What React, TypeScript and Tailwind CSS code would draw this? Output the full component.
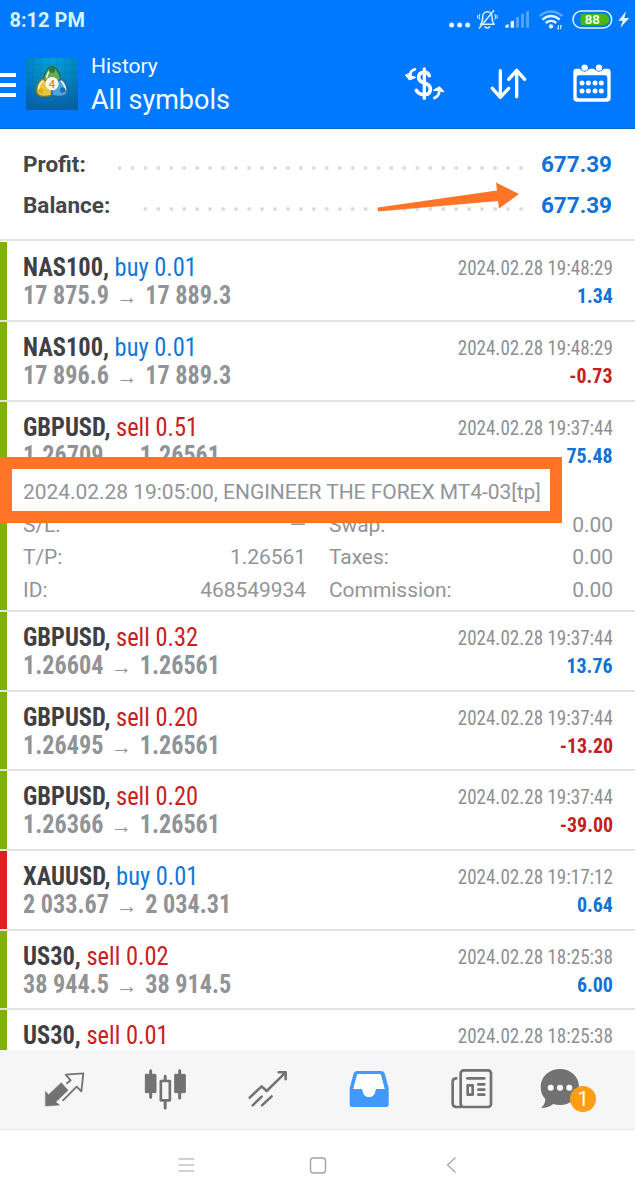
import React from "react";

type Trade = {
  symbol: string;
  side: "buy" | "sell";
  lots: string;
  time: string;
  height: string;
  from?: string;
  to?: string;
  profit?: string;
  stripe?: string;
  expanded?: boolean;
};

const trades: Trade[] = [
  { symbol: "NAS100", side: "buy", lots: "0.01", from: "17 875.9", to: "17 889.3", time: "2024.02.28 19:48:29", profit: "1.34", height: "h-[81px] border-b-2 pt-[1px]" },
  { symbol: "NAS100", side: "buy", lots: "0.01", from: "17 896.6", to: "17 889.3", time: "2024.02.28 19:48:29", profit: "-0.73", height: "h-[80px] border-b-2" },
  { symbol: "GBPUSD", side: "sell", lots: "0.51", from: "1.26709", to: "1.26561", time: "2024.02.28 19:37:44", profit: "75.48", height: "h-[210px] border-b-2", expanded: true },
  { symbol: "GBPUSD", side: "sell", lots: "0.32", from: "1.26604", to: "1.26561", time: "2024.02.28 19:37:44", profit: "13.76", height: "h-[80px] border-b-2" },
  { symbol: "GBPUSD", side: "sell", lots: "0.20", from: "1.26495", to: "1.26561", time: "2024.02.28 19:37:44", profit: "-13.20", height: "h-[79px] border-b-2" },
  { symbol: "GBPUSD", side: "sell", lots: "0.20", from: "1.26366", to: "1.26561", time: "2024.02.28 19:37:44", profit: "-39.00", height: "h-[80px] border-b-2" },
  { symbol: "XAUUSD", side: "buy", lots: "0.01", from: "2 033.67", to: "2 034.31", time: "2024.02.28 19:17:12", profit: "0.64", height: "h-[80px] border-b-2", stripe: "bg-[#e02020]" },
  { symbol: "US30", side: "sell", lots: "0.02", from: "38 944.5", to: "38 914.5", time: "2024.02.28 18:25:38", profit: "6.00", height: "h-[79px] border-b-2" },
  { symbol: "US30", side: "sell", lots: "0.01", time: "2024.02.28 18:25:38", height: "h-[41px]" },
];

function StatusIcons() {
  return (
    <svg className="h-[39px] w-[185px]" viewBox="200 0 555 117" fill="none">
      <g fill="#e3f5ff">
        <circle cx="214" cy="75" r="7.5" />
        <circle cx="238" cy="75" r="7.5" />
        <circle cx="262" cy="75" r="7.5" />
      </g>
      <g stroke="#d5f0ff" strokeWidth="4.5" strokeLinecap="round" strokeLinejoin="round">
        <path d="M300 73h42c-7-6-7-14-7-22 0-9-6-16-14-16s-14 7-14 16c0 8 0 16-7 22z" />
        <path d="M314 80q7 8 14 0M340 32 297 84" />
        <path d="M298 43q-4 8 0 15M292 46q-2 5 0 9M344 43q4 8 0 15M350 46q2 5 0 9" strokeWidth="3" />
      </g>
      <g fill="#e3f5ff">
        <path d="M375 83v-7l10-4v11zM391 83V64l10-2v21z" />
        <path d="M407 83V52l9-2v33zM422 83V43l9-3v43zM437 83V35l9-3v51z" opacity=".35" />
      </g>
      <g stroke="#e3f5ff" strokeWidth="7" fill="none">
        <path d="M478 48q34-27 68 0" opacity=".4" />
        <path d="M486 59q26-22 52 0M496 69q16-13 32 0" />
      </g>
      <circle cx="512" cy="79" r="6.5" fill="#e3f5ff" />
      <path d="M534 75v13M541 75v13M531 84l3 4M544 79l-3-4" stroke="#e3f5ff" strokeWidth="3" />
      <rect x="578" y="33" width="116" height="51" rx="25" stroke="#e3f5ff" strokeWidth="4.5" />
      <path d="M603 41h65q16 2 19 17-2 15-19 18h-65q-6-17 0-35z" fill="#49b80c" />
      <text x="636" y="73" fill="#eaffea" fontSize="40" fontWeight="700" fontFamily="Roboto, sans-serif" textAnchor="middle">88</text>
      <path d="m737 34-23 28h13l-7 21 27-29h-15z" fill="#e3f5ff" />
    </svg>
  );
}

function AppLogo() {
  return (
    <svg className="ml-[10px] h-[52px] w-[52px] shrink-0" viewBox="0 0 156 156">
      <defs>
        <radialGradient id="sky" cx=".5" cy="0" r="1">
          <stop offset="0" stopColor="#02a6d6" />
          <stop offset=".55" stopColor="#0380c0" />
          <stop offset="1" stopColor="#075fa6" />
        </radialGradient>
      </defs>
      <rect width="156" height="156" fill="url(#sky)" />
      <path d="M0 20h156M0 44h156M0 68h156M0 92h156M0 116h156M0 140h156M20 0v156M44 0v156M68 0v156M92 0v156M116 0v156M140 0v156" stroke="#0a6fae" strokeWidth="1.5" opacity=".5" />
      <g strokeWidth="4" strokeLinejoin="round">
        <path d="M78 26c12 0 24 20 27 42l-27 14-26-14c2-22 14-42 26-42z" fill="#6aa957" stroke="#1f6a4c" />
        <path d="M50 62c-12 6-19 24-18 38 1 16 22 18 44 12l2-30z" fill="#e6c63f" stroke="#7d7c34" />
        <path d="M106 62c12 6 19 24 18 38-1 16-22 18-46 12V82z" fill="#4aa4de" stroke="#1c68a8" />
      </g>
      <path d="M62 58q4-16 10-20M38 94q1-16 12-24M118 94q-1-14-12-24" stroke="#e8f2cc" strokeWidth="5" fill="none" strokeLinecap="round" />
      <circle cx="78" cy="36" r="9" fill="#2f7d35" />
      <circle cx="45" cy="98" r="8" fill="#e4ae14" />
      <circle cx="110" cy="96" r="8" fill="#1c68b0" />
      <circle cx="78" cy="77" r="20" fill="#fbf6ee" />
      <text x="78" y="89" fontSize="34" fontWeight="500" fill="#e9813d" textAnchor="middle" fontFamily="Roboto, sans-serif">4</text>
    </svg>
  );
}

function HeaderActions() {
  return (
    <svg className="ml-auto h-[46px] w-[215px] shrink-0" viewBox="69 184 645 138" fill="none" stroke="#fff" strokeLinecap="round" strokeLinejoin="round">
      <g>
        <path d="M133 208v88" strokeWidth="10" />
        <path d="M148 228q-4-10-15-10-17 0-17 15 0 12 17 17 18 5 18 19 0 16-18 16-18 0-24-13" strokeWidth="11" />
        <path d="M105 209q-16 5-15 20" strokeWidth="8" />
        <path d="m77 227 11 14 20-8-13-3-2-9z" fill="#fff" strokeWidth="3" />
        <path d="M163 295q14-6 15-20" strokeWidth="8" />
        <path d="m161 272 17-10 13 14-11-3z" fill="#fff" strokeWidth="4" />
      </g>
      <g strokeWidth="10">
        <path d="M361 213v80M337 266l24 27 25-27" />
        <path d="M410 291v-78M386 239l24-27 24 27" />
      </g>
      <path fill="#fff" stroke="none" fillRule="evenodd" d="M590 207h9q15 18 30 0h13q15 18 30 0h10q10 0 10 10v79q0 10-10 10h-92q-10 0-10-10v-79q0-10 10-10zM597 227q-7 0-7 7v55q0 7 7 7h78q7 0 7-7v-55q0-7-7-7z" />
      <g fill="#fff" stroke="none">
        <circle cx="614" cy="204" r="9.500" />
        <circle cx="657" cy="204" r="9.500" />
        {[606, 625, 645, 664].map((x) => (
          <React.Fragment key={x}>
            <circle cx={x} cy="250" r="7.5" />
            <circle cx={x} cy="274" r="7.5" />
          </React.Fragment>
        ))}
      </g>
    </svg>
  );
}

function SummaryLine({ label, width, dots }: { label: string; width: string; dots: string }) {
  return (
    <div className="flex h-[41px] items-center pr-[23px] pl-[23px] text-[22.5px] font-bold">
      <span className={`${width} text-[#45464a]`}>{label}</span>
      <svg className={`${dots} mt-[6px] h-[4px]`}>
        <line x1="100%" x2="0" y1="2" y2="2" stroke="#dcdcdc" strokeWidth="4" strokeLinecap="round" strokeDasharray="0 12.95" transform="translate(-5 0)" />
      </svg>
      <span className="ml-auto text-[#1071d8]">677.39</span>
    </div>
  );
}

function DetailLine({ left, value, right }: { left: string; value: string; right: string }) {
  return (
    <div className="flex h-[32.700px] items-center">
      <span className="w-[100px]">{left}</span>
      <span className="w-[183px] text-right">{value}</span>
      <span className="ml-[23px]">{right}</span>
      <span className="ml-auto">0.00</span>
    </div>
  );
}

function TradeRow({ t }: { t: Trade }) {
  const tone = t.side === "buy" ? "text-[#0f76dc]" : "text-[#c9201f]";
  const profitTone = t.profit?.startsWith("-") ? "text-[#c4201f]" : "text-[#1072d6]";
  return (
    <div className={`relative flex shrink-0 border-[#e4e4e5] ${t.height}`}>
      <div className={`w-[6.500px] shrink-0 ${t.stripe ?? "bg-[#7fb202]"}`} />
      <div className="min-w-0 flex-1 pt-[11px] pr-[22px] pl-[16.500px]">
        <div className="flex h-[28px] items-center justify-between whitespace-nowrap [font-stretch:75%]">
          <div className="origin-left scale-x-[0.94] text-[26px]">
            <span className="font-bold text-[#3f4045]">{t.symbol},</span> <span className={tone}>{`${t.side} ${t.lots}`}</span>
          </div>
          <span className="origin-right scale-x-[0.908] pt-[4px] text-[21px] text-[#8e8f92]">{t.time}</span>
        </div>
        {t.from && (
          <div className="flex h-[29px] items-center justify-between whitespace-nowrap font-bold [font-stretch:75%]">
            <div className="flex origin-left scale-x-[0.956] items-center text-[25.300px] text-[#919396]">
              <span>{t.from}</span>
              <span className="flex h-[29px] w-[38px] items-center justify-center pt-[2px] font-['Liberation_Sans'] text-[22px] leading-none font-normal">→</span>
              <span>{t.to}</span>
            </div>
            <span className={`origin-right scale-x-[0.95] pt-[3px] text-[21px] ${profitTone}`}>{t.profit}</span>
          </div>
        )}
        {t.expanded && (
          <div className="text-[21px] font-normal tracking-[-0.045px] whitespace-nowrap text-[#929497]">
            <div className="flex h-[39px] items-center pt-[6px]">2024.02.28 19:05:00, ENGINEER THE FOREX MT4-03[tp]</div>
            <DetailLine left="S/L:" value="—" right="Swap:" />
            <DetailLine left="T/P:" value="1.26561" right="Taxes:" />
            <DetailLine left="ID:" value="468549934" right="Commission:" />
          </div>
        )}
      </div>
      {t.expanded && <div className="absolute top-[55px] left-0 h-[66px] w-[562px] border-[12px] border-[#ff7427]" />}
    </div>
  );
}

function Tab({ viewBox, children }: { viewBox: string; children: React.ReactNode }) {
  return (
    <div className="flex flex-1 items-center justify-center">
      <svg className="h-[46px] w-[60px] overflow-visible" viewBox={viewBox} fill="none" stroke="#727272" strokeLinecap="round" strokeLinejoin="round">
        {children}
      </svg>
    </div>
  );
}

function TabBar() {
  return (
    <div className="relative flex h-[80px] shrink-0 border-b border-[#e9e9e9] bg-[#f6f6f6] px-[13px]">
      <Tab viewBox="101 81 180 138">
        <path d="m136 155 9 9 38-36 20 23-37 35 11 9-41 3z" fill="#727272" strokeWidth="2" />
        <path d="m200 130 11-9-15-17 53-4-6 54-14-14-41 41" strokeWidth="5.5" />
      </Tab>
      <Tab viewBox="406 81 180 138">
        <path d="M453 92v80M540 92v82M496.500 109v12M496.500 184v20" strokeWidth="9" />
        <rect x="437" y="103" width="32" height="55" rx="2" fill="#727272" strokeWidth="3" />
        <rect x="525" y="103" width="32" height="55" rx="2" fill="#727272" strokeWidth="3" />
        <rect x="483.500" y="123" width="27" height="58" strokeWidth="8" fill="#f6f6f6" />
      </Tab>
      <Tab viewBox="710 81 180 138">
        <path d="m748 173 36-34 15 14 57-56M835 97h21v21M757 196l27-26M785 196l29-27" strokeWidth="7.5" />
      </Tab>
      <Tab viewBox="55 81 180 138">
        <path fill="#4299fb" stroke="none" fillRule="evenodd" d="M112 93h72q8 0 11 7l12 45v49q0 7-7 7H97q-7 0-7-7v-49l12-45q3-7 10-7zM117 102q-4 0-5 4l-11 41h27q2 24 20 24t20-24h27l-11-41q-1-4-5-4z" />
        <path fill="#fff" stroke="none" d="M117 102q-4 0-5 4l-11 41h27q2 24 20 24t20-24h27l-11-41q-1-4-5-4z" />
      </Tab>
      <Tab viewBox="359 81 180 138">
        <rect x="421" y="91" width="91" height="110" rx="9" strokeWidth="8" />
        <path d="M421 201h-13q-11 0-11-11v-65q0-10 11-10" strokeWidth="8" />
        <path d="M441 115h51M474 133h18M474 149h18M474 164h18" strokeWidth="8" />
        <rect x="442" y="136" width="15" height="28" strokeWidth="8" />
      </Tab>
      <Tab viewBox="664 81 180 138">
        <path d="M721 87c32 0 57 23 57 54 0 32-25 54-57 54-7 0-14-1-20-3-10 8-22 12-37 12 9-8 13-17 13-27-9-9-14-21-14-36 0-31 26-54 58-54z" fill="#727272" stroke="none" />
        <g fill="#fff" stroke="none">
          <circle cx="693" cy="143" r="9" />
          <circle cx="721" cy="143" r="9" />
          <circle cx="749" cy="143" r="9" />
        </g>
      </Tab>
      <div className="absolute top-[36px] left-[570px] flex size-[26px] items-center justify-center rounded-full bg-[#ff9d16] text-[20px] text-white">1</div>
    </div>
  );
}

export default function App() {
  return (
    <div className="flex h-[1200px] w-[635px] flex-col overflow-hidden bg-white font-[Roboto,'Noto_Sans',sans-serif]">
      <header className="flex h-[129px] shrink-0 flex-col border-b border-[#0b66c6] bg-[#0179ff]">
        <div className="flex h-[39px] items-center justify-between pr-[3px] pl-[9.500px]">
          <span className="pt-[1px] text-[20px] font-bold text-[#d6f4ff]">8:12 PM</span>
          <StatusIcons />
        </div>
        <div className="flex h-[90px] items-center pr-[17px]">
          <div className="flex w-[16px] flex-col gap-[6px] pt-[2px]">
            <div className="h-[4px] bg-white" />
            <div className="h-[4px] bg-white" />
            <div className="h-[4px] bg-white" />
          </div>
          <AppLogo />
          <div className="ml-[13px] flex flex-col pt-[1px] whitespace-nowrap text-[#f5fcff]">
            <span className="h-[31px] text-[21px] leading-[29px]">History</span>
            <span className="text-[27px] leading-[34px]">All symbols</span>
          </div>
          <HeaderActions />
        </div>
      </header>

      <section className="relative h-[112px] shrink-0 border-b-2 border-[#e4e4e5] pt-[15px]">
        <SummaryLine label="Profit:" width="w-[95px]" dots="w-[408px]" />
        <SummaryLine label="Balance:" width="w-[120px]" dots="w-[383px]" />
        <svg className="absolute top-[50px] left-[370px] h-[40px] w-[160px]" viewBox="370 179 160 40">
          <path d="m378 207.500 119-17-1-8 23 11.500-20 14.500-1-7.500-120 10.500z" fill="#ff7427" />
        </svg>
      </section>

      <main className="flex min-h-0 flex-1 flex-col overflow-hidden">
        {trades.map((t, i) => (
          <TradeRow key={i} t={t} />
        ))}
      </main>

      <TabBar />

      <nav className="flex h-[70px] shrink-0 items-center justify-center">
        <svg className="h-[18px] w-[281px]" viewBox="177 1155.500 281 18" fill="none" stroke="#a4a4a4" strokeWidth="1.100">
          <path d="M178.500 1158.500h15.500M178.500 1164.500h15.500M178.500 1170.500h15.500" />
          <rect x="310.500" y="1157.500" width="15" height="15" rx="3" strokeWidth="1.400" />
          <path d="m455.500 1157-8 7.500 8 7.500" strokeWidth="1.200" />
        </svg>
      </nav>
    </div>
  );
}
